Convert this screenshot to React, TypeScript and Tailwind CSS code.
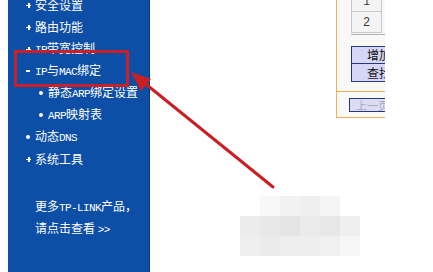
import React from "react";

const cjk = { fontFamily: '"Noto Sans CJK SC", "Noto Sans", sans-serif' };
const mono = { fontFamily: '"Liberation Mono", monospace' };

function L({ children }: { children: React.ReactNode }) {
  return (
    <span className="text-[11px] tracking-[-0.6px]" style={mono}>
      {children}
    </span>
  );
}

function Plus() {
  return (
    <span className="relative inline-block w-[5px] h-[5px] mr-[5px]">
      <span className="absolute left-0 top-[2px] w-[5px] h-[1.5px] bg-white" />
      <span className="absolute left-[2px] top-0 w-[1.5px] h-[5px] bg-white" />
    </span>
  );
}
function Minus() {
  return <span className="inline-block w-[5px] h-[2px] bg-white mr-[5px]" />;
}
function Dot() {
  return <span className="inline-block w-[4px] h-[4px] rounded-full bg-white mr-[5px]" />;
}

function Item({ marker, indent, children }: { marker: React.ReactNode; indent?: boolean; children: React.ReactNode }) {
  return (
    <div className={`h-[22px] flex items-center text-[12px] text-white ${indent ? "pl-[31px]" : "pl-[18px]"}`}>
      <span className="w-[9px] flex items-center">{marker}</span>
      <span className="leading-none">{children}</span>
    </div>
  );
}

export default function App() {
  return (
    <div className="relative w-[433px] h-[272px] bg-white overflow-hidden flex" style={cjk}>
      <div className="w-[8px] bg-white" />
      <div className="w-[142px] h-full bg-[#0d4ea6] border-r border-[#0a3a7a] flex flex-col">
        <div className="mt-[-6px]">
          <Item marker={<Plus />}>安全设置</Item>
          <Item marker={<Plus />}>路由功能</Item>
          <Item marker={<Plus />}><L>IP</L>带宽控制</Item>
          <Item marker={<Minus />}><L>IP</L>与<L>MAC</L>绑定</Item>
          <Item marker={<Dot />} indent><span>静态<L>ARP</L>绑定设置</span></Item>
          <Item marker={<Dot />} indent><span><L>ARP</L>映射表</span></Item>
          <Item marker={<Dot />}>动态<L>DNS</L></Item>
          <Item marker={<Plus />}>系统工具</Item>
        </div>
        <div className="mt-[26px] pl-[27px] text-[12px] text-white leading-[19px]">
          <div>更多<L>TP-LINK</L>产品，</div>
          <div>请点击查看 <L>&gt;&gt;</L></div>
        </div>
      </div>
      <div className="flex-1 relative">
        <div className="ml-[186px] w-[49px] h-[118px] border-l border-b border-[#f0b050] bg-[#f8f8f8] overflow-hidden flex flex-col">
          <div className="ml-[14px] w-[31px] mt-[-8px] h-[20px] border border-[#c8c8c8] bg-[#f4f4f4] flex items-center justify-center text-[11px] text-[#333]" style={mono}>1</div>
          <div className="ml-[14px] w-[31px] h-[21px] border border-t-0 border-[#c8c8c8] bg-[#f4f4f4] flex items-center justify-center text-[12px] text-[#333]" style={{ fontFamily: '"Liberation Sans", sans-serif' }}>2</div>
          <div className="ml-[14px] mt-[1px] w-[40px] h-[1px] bg-[#b0b0b0]" />
          <div className="ml-[14px] mt-[11px] w-[56px] h-[18px] border border-[#243a78] bg-[#d6d6f6] flex items-center justify-center text-[12px] text-[#111]">增加</div>
          <div className="ml-[14px] w-[56px] h-[18px] border border-t-0 border-[#243a78] bg-[#d6d6f6] flex items-center justify-center text-[12px] text-[#111]">查找</div>
          <div className="mt-[9px] w-full h-[1px] bg-[#f0b050]" />
          <div className="ml-[12px] mt-[6px] w-[56px] h-[14px] border border-[#243a78] bg-[#dcdcf4] flex items-center pl-[6px] text-[11px] text-[#a8a8b8]">上一页</div>
        </div>
      </div>

      {/* annotation overlays */}
      <div className="absolute left-[14px] top-[50px] w-[115px] h-[37px] border-[3px] border-[#cc1f28]" />
      <svg className="absolute left-0 top-0" width="433" height="272" viewBox="0 0 433 272">
        <line x1="273" y1="187" x2="142" y2="81" stroke="#cc1f24" strokeWidth="3" strokeLinecap="round" />
        <polygon points="131,72 151,79 141,91" fill="#cc1f24" />
      </svg>
      <div className="absolute left-[240px] top-[196px] w-[120px] h-[60px] grid grid-cols-6 grid-rows-3">
        <div className="bg-white" />
        <div className="bg-[#f8f8f8]" />
        <div className="bg-[#f2f2f2]" />
        <div className="bg-[#efefef]" />
        <div className="bg-[#f5f5f5]" />
        <div className="bg-white" />
        <div className="bg-[#ececec]" />
        <div className="bg-[#e8e8e8]" />
        <div className="bg-[#e4e4e4]" />
        <div className="bg-[#eaeaea]" />
        <div className="bg-[#e7e7e7]" />
        <div className="bg-[#efefef]" />
        <div className="bg-[#efefef]" />
        <div className="bg-[#ebebeb]" />
        <div className="bg-[#ededed]" />
        <div className="bg-[#eeeeee]" />
        <div className="bg-[#f0f0f0]" />
        <div className="bg-[#f6f6f6]" />
      </div>
    </div>
  );
}
